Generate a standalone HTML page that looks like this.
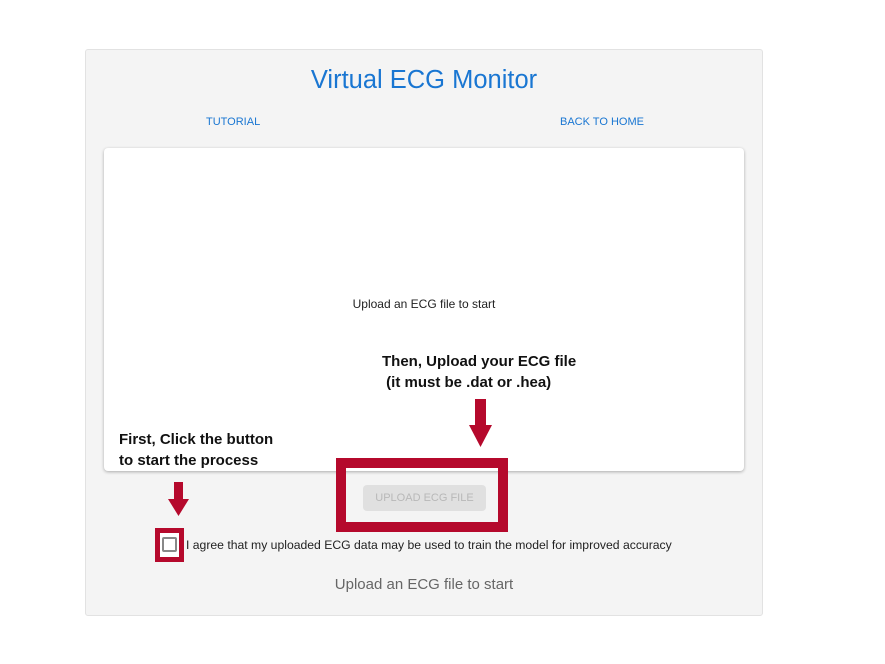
<!DOCTYPE html>
<html><head><style>
body{margin:0;width:885px;height:664px;background:#fff;position:relative;font-family:"Liberation Sans",Arial,sans-serif;overflow:hidden}
.a{position:absolute}
</style></head><body>
<div class="a" style="left:85px;top:49px;width:676px;height:565px;background:#f4f4f4;border:1px solid #e2e2e2;border-radius:3px"></div>
<div class="a" style="left:85px;top:66px;width:678px;text-align:center;font-size:25.5px;color:#1976d2">Virtual ECG Monitor</div>
<div class="a" style="left:206px;top:116px;font-size:11px;color:#1976d2">TUTORIAL</div>
<div class="a" style="left:560px;top:116px;font-size:11px;color:#1976d2">BACK TO HOME</div>
<div class="a" style="left:104px;top:148px;width:640px;height:323px;background:#fff;border-radius:4px;box-shadow:0 1px 3px rgba(0,0,0,.3)"></div>
<div class="a" style="left:104px;top:297px;width:640px;text-align:center;font-size:12px;color:#222">Upload an ECG file to start</div>
<div class="a" style="left:363px;top:485px;width:123px;height:26px;background:#e0e0e0;border-radius:4px;color:#b8b8b8;font-size:11px;line-height:26px;text-align:center">UPLOAD ECG FILE</div>
<div class="a" style="left:336px;top:458px;width:152px;height:54px;border:10px solid #b5092c"></div>
<div class="a" style="left:155px;top:528px;width:19px;height:24px;border:5px solid #b5092c;background:#fff"></div>
<div class="a" style="left:162px;top:537px;width:11px;height:11px;border:2px solid #888;border-radius:2px"></div>
<div class="a" style="left:186px;top:538px;font-size:12.2px;color:#222">I agree that my uploaded ECG data may be used to train the model for improved accuracy</div>
<div class="a" style="left:85px;top:576px;width:678px;text-align:center;font-size:15px;color:#666">Upload an ECG file to start</div>
<div class="a" style="left:382px;top:351px;font-size:15px;font-weight:bold;color:#111;line-height:21px">Then, Upload your ECG file<br>&nbsp;(it must be .dat or .hea)</div>
<div class="a" style="left:119px;top:429px;font-size:15px;font-weight:bold;color:#111;line-height:21px">First, Click the button<br>to start the process</div>
<svg class="a" style="left:0;top:0" width="885" height="664"><path fill="#b5092c" d="M475 399h11v26h6l-11.5 22l-11.5-22h6z M174 482h9v17h6l-10.5 17l-10.5-17h6z"/></svg>
</body></html>
